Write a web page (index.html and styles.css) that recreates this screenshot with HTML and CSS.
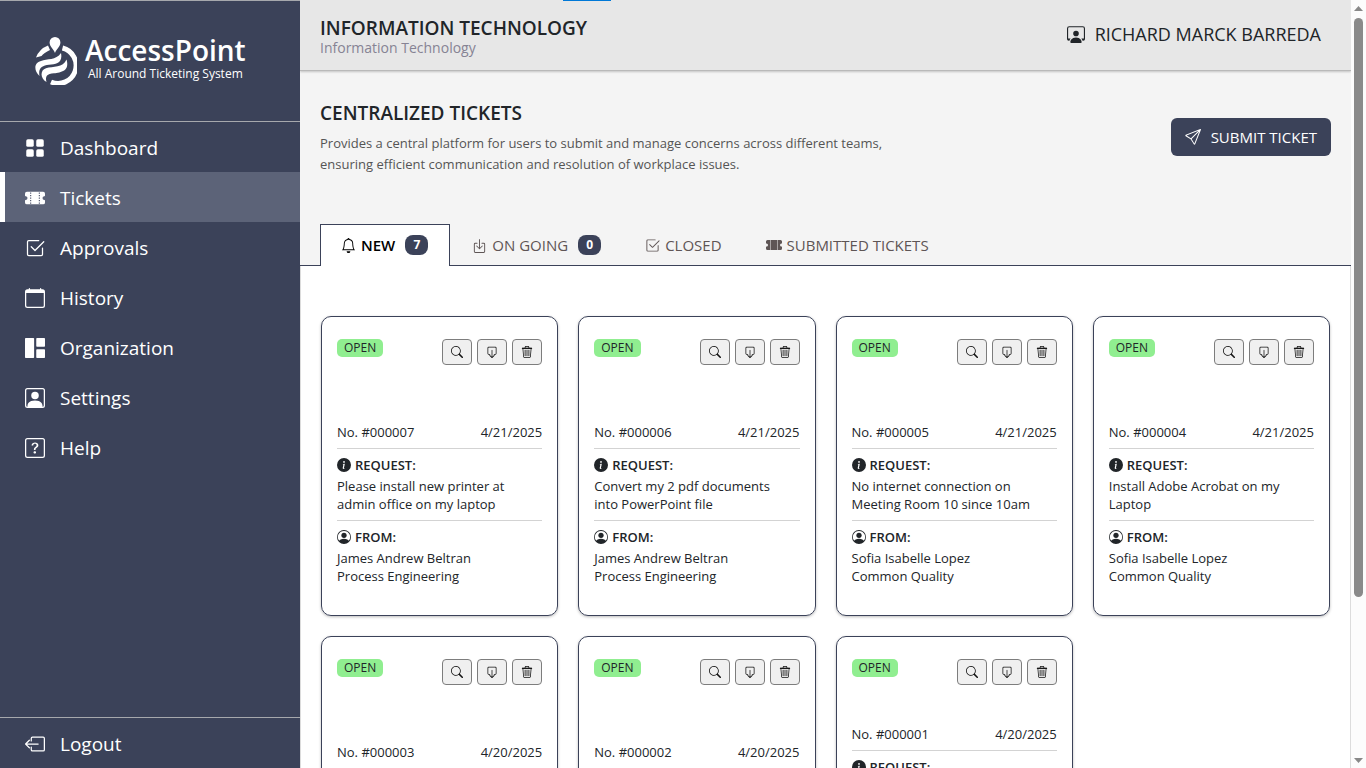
FILE: index.html
```html
<!DOCTYPE html>
<html lang="en">
<head>
<meta charset="utf-8">
<meta name="viewport" content="width=device-width, initial-scale=1">
<title>AccessPoint - Tickets</title>
<link rel="stylesheet" href="styles.css">
</head>
<body>
<svg class="sprite" aria-hidden="true">
  <symbol id="i-grid" viewBox="0 0 16 16"><rect x="1" y="1" width="6" height="6" rx="1.3"/><rect x="9" y="1" width="6" height="6" rx="1.3"/><rect x="1" y="9" width="6" height="6" rx="1.3"/><rect x="9" y="9" width="6" height="6" rx="1.3"/></symbol>
  <symbol id="i-ticket" viewBox="0 0 16 16"><path d="M0 4.5A1.5 1.5 0 0 1 1.5 3h13A1.5 1.5 0 0 1 16 4.500V6a.5.5 0 0 1-.5.5 1.500 1.500 0 0 0 0 3 .5.5 0 0 1 .5.5v1.500a1.500 1.500 0 0 1-1.500 1.500h-13A1.500 1.500 0 0 1 0 11.500V10a.5.5 0 0 1 .5-.5 1.500 1.500 0 1 0 0-3A.5.5 0 0 1 0 6zm4-1v1h1v-1zm1 3v-1H4v1zm7 0v-1h-1v1zm-1-2h1v-1h-1zm-6 3H4v1h1zm7 1v-1h-1v1zm-7 1H4v1h1zm7 1v-1h-1v1zm-8 1v1h1v-1zm7 1h1v-1h-1z"/></symbol>
  <symbol id="i-check" viewBox="0 0 16 16"><path d="M3 14.500A1.500 1.500 0 0 1 1.500 13V3A1.500 1.500 0 0 1 3 1.500h8a.5.5 0 0 1 0 1H3a.5.5 0 0 0-.5.5v10a.5.5 0 0 0 .5.5h10a.5.5 0 0 0 .5-.5V8a.5.5 0 0 1 1 0v5a1.500 1.500 0 0 1-1.500 1.500z"/><path d="m8.354 10.354 7-7a.5.5 0 0 0-.708-.708L8 9.293 5.354 6.646a.5.5 0 1 0-.708.708l3 3a.5.5 0 0 0 .708 0"/></symbol>
  <symbol id="i-calendar" viewBox="0 0 16 16"><path d="M3.500 0a.5.5 0 0 1 .5.5V1h8V.5a.5.5 0 0 1 1 0V1h1a2 2 0 0 1 2 2v11a2 2 0 0 1-2 2H2a2 2 0 0 1-2-2V3a2 2 0 0 1 2-2h1V.5a.5.5 0 0 1 .5-.5M1 4v10a1 1 0 0 0 1 1h12a1 1 0 0 0 1-1V4z"/></symbol>
  <symbol id="i-layout" viewBox="0 0 16 16"><rect x="0" y="0" width="7.300" height="16" rx=".6"/><rect x="9" y="0" width="7" height="7" rx=".6"/><rect x="9" y="9" width="7" height="7" rx=".6"/></symbol>
  <symbol id="i-person-square" viewBox="0 0 16 16"><path d="M11 6a3 3 0 1 1-6 0 3 3 0 0 1 6 0"/><path d="M2 0a2 2 0 0 0-2 2v12a2 2 0 0 0 2 2h12a2 2 0 0 0 2-2V2a2 2 0 0 0-2-2zm12 1a1 1 0 0 1 1 1v12a1 1 0 0 1-1 1v-1c0-1-1-4-6-4s-6 3-6 4v1a1 1 0 0 1-1-1V2a1 1 0 0 1 1-1z"/></symbol>
  <symbol id="i-question" viewBox="0 0 16 16"><path d="M14 1a1 1 0 0 1 1 1v12a1 1 0 0 1-1 1H2a1 1 0 0 1-1-1V2a1 1 0 0 1 1-1zM2 0a2 2 0 0 0-2 2v12a2 2 0 0 0 2 2h12a2 2 0 0 0 2-2V2a2 2 0 0 0-2-2z"/><path d="M5.255 5.786a.237.237 0 0 0 .241.247h.825c.138 0 .248-.113.266-.25.09-.656.54-1.134 1.342-1.134.686 0 1.314.343 1.314 1.168 0 .635-.374.927-.965 1.371-.673.489-1.206 1.060-1.168 1.987l.003.217a.25.25 0 0 0 .25.246h.811a.25.25 0 0 0 .25-.25v-.105c0-.718.273-.927 1.010-1.486.609-.463 1.244-.977 1.244-2.056 0-1.511-1.276-2.241-2.673-2.241-1.267 0-2.655.59-2.750 2.286m1.557 5.763c0 .533.425.927 1.010.927.609 0 1.028-.394 1.028-.927 0-.552-.42-.940-1.029-.940-.584 0-1.009.388-1.009.940"/></symbol>
  <symbol id="i-logout" viewBox="0 0 16 16"><path fill-rule="evenodd" d="M4.500 5.500V3.500a1.500 1.500 0 0 1 1.500-1.500h8.500A1.500 1.500 0 0 1 16 3.500v9a1.500 1.500 0 0 1-1.500 1.500H6a1.500 1.500 0 0 1-1.500-1.500v-2a.5.5 0 0 1 1 0v2a.5.5 0 0 0 .5.5h8.500a.5.5 0 0 0 .5-.5v-9a.5.5 0 0 0-.5-.5H6a.5.5 0 0 0-.5.5v2a.5.5 0 0 1-1 0"/><path fill-rule="evenodd" d="M.146 8.354a.5.5 0 0 1 0-.708l3-3a.5.5 0 1 1 .708.708L1.707 7.500H10.500a.5.5 0 0 1 0 1H1.707l2.147 2.146a.5.5 0 0 1-.708.708z"/></symbol>
  <symbol id="i-workspace" viewBox="0 0 16 16"><path d="M4 16s-1 0-1-1 1-4 5-4 5 3 5 4-1 1-1 1zm4-5.950a2.500 2.500 0 1 0 0-5 2.500 2.500 0 0 0 0 5"/><path d="M2 1a2 2 0 0 0-2 2v9.500A1.500 1.500 0 0 0 1.500 14h.653a5.400 5.400 0 0 1 1.066-2H1V3a1 1 0 0 1 1-1h12a1 1 0 0 1 1 1v9h-2.219c.554.654.89 1.373 1.066 2h.653a1.500 1.500 0 0 0 1.500-1.500V3a2 2 0 0 0-2-2z"/></symbol>
  <symbol id="i-send" viewBox="0 0 16 16"><path d="M15.854.146a.5.5 0 0 1 .11.540l-5.819 14.547a.75.75 0 0 1-1.329.124l-3.178-4.995L.643 7.184a.75.75 0 0 1 .124-1.330L15.314.037a.5.5 0 0 1 .540.110ZM6.636 10.070l2.761 4.338L14.130 2.576zm6.787-8.201L1.591 6.602l4.339 2.760z"/></symbol>
  <symbol id="i-bell" viewBox="0 0 16 16"><path d="M8 16a2 2 0 0 0 2-2H6a2 2 0 0 0 2 2M8 1.918l-.797.161A4 4 0 0 0 4 6c0 .628-.134 2.197-.459 3.742-.16.767-.376 1.566-.663 2.258h10.244c-.287-.692-.502-1.490-.663-2.258C12.134 8.197 12 6.628 12 6a4 4 0 0 0-3.203-3.920zM14.220 12c.223.447.481.801.78 1H1c.299-.199.557-.553.780-1C2.680 10.200 3 6.880 3 6c0-2.420 1.720-4.440 4.005-4.901a1 1 0 1 1 1.990 0A5 5 0 0 1 13 6c0 .88.320 4.200 1.220 6"/></symbol>
  <symbol id="i-box-in" viewBox="0 0 16 16"><path d="M3.500 6a.5.5 0 0 0-.5.5v8a.5.5 0 0 0 .5.5h9a.5.5 0 0 0 .5-.5v-8a.5.5 0 0 0-.5-.5h-2a.5.5 0 0 1 0-1h2A1.500 1.500 0 0 1 14 6.500v8a1.500 1.500 0 0 1-1.500 1.500h-9A1.500 1.500 0 0 1 2 14.500v-8A1.500 1.500 0 0 1 3.500 5h2a.5.5 0 0 1 0 1z"/><path d="M7.646 11.854a.5.5 0 0 0 .708 0l3-3a.5.5 0 0 0-.708-.708L8.500 10.293V1.500a.5.5 0 0 0-1 0v8.793L5.354 8.146a.5.5 0 1 0-.708.708z"/></symbol>
  <symbol id="i-search" viewBox="0 0 16 16"><path d="M11.742 10.344a6.500 6.500 0 1 0-1.397 1.398h-.001q.044.060.098.115l3.850 3.850a1 1 0 0 0 1.415-1.414l-3.850-3.850a1 1 0 0 0-.115-.100zM12 6.500a5.500 5.500 0 1 1-11 0 5.500 5.500 0 0 1 11 0"/></symbol>
  <symbol id="i-box-down" viewBox="0 0 16 16"><path d="M5.500 11.500h-2A1.500 1.500 0 0 1 2 10V2.500A1.500 1.500 0 0 1 3.500 1h9A1.500 1.500 0 0 1 14 2.500V10a1.500 1.500 0 0 1-1.500 1.500h-2v-1h2a.5.5 0 0 0 .5-.5V2.500a.5.5 0 0 0-.5-.5h-9a.5.5 0 0 0-.5.5V10a.5.5 0 0 0 .5.5h2z"/><path d="M7.646 15.854a.5.5 0 0 0 .708 0l3-3a.5.5 0 0 0-.708-.708L8.500 14.293V5.500a.5.5 0 0 0-1 0v8.793l-2.146-2.147a.5.5 0 0 0-.708.708z"/></symbol>
  <symbol id="i-trash" viewBox="0 0 16 16"><path d="M6.500 1h3a.5.5 0 0 1 .5.500v1H6v-1a.5.5 0 0 1 .5-.5M11 2.500v-1A1.500 1.500 0 0 0 9.500 0h-3A1.500 1.500 0 0 0 5 1.500v1H1.500a.5.5 0 0 0 0 1h.538l.853 10.660A2 2 0 0 0 4.885 16h6.230a2 2 0 0 0 1.994-1.840l.853-10.660h.538a.5.5 0 0 0 0-1zm1.958 1-.846 10.580a1 1 0 0 1-.997.920h-6.230a1 1 0 0 1-.997-.920L3.042 3.500z"/><path d="M1.500 3h13" stroke="currentColor" stroke-width="1.600"/><path d="M5.500 5v8.500M8 5v8.500M10.500 5v8.500" stroke="currentColor" stroke-width="1.100"/></symbol>
  <symbol id="i-info" viewBox="0 0 16 16"><path d="M8 16A8 8 0 1 0 8 0a8 8 0 0 0 0 16m.930-9.412-1 4.705c-.070.340.029.533.304.533.194 0 .487-.070.686-.246l-.088.416c-.287.346-.920.598-1.465.598-.703 0-1.002-.422-.808-1.319l.738-3.468c.064-.293.006-.399-.287-.470l-.451-.081.082-.381 2.290-.287zM8 5.500a1 1 0 1 1 0-2 1 1 0 0 1 0 2"/></symbol>
  <symbol id="i-person" viewBox="0 0 16 16"><path d="M11 6a3 3 0 1 1-6 0 3 3 0 0 1 6 0"/><path fill-rule="evenodd" d="M0 8a8 8 0 1 1 16 0A8 8 0 0 1 0 8m8-7a7 7 0 0 0-5.468 11.370C3.242 11.226 4.805 10 8 10s4.757 1.225 5.468 2.370A7 7 0 0 0 8 1"/></symbol>
</svg>

<div class="app">
  <aside class="sidebar">
    <a class="brand" href="#">
      <svg class="brand-logo" viewBox="0 0 42 48" aria-hidden="true">
        <path d="M20 16C19 12.500 14.600 9.500 14.600 5.400a5.400 5.400 0 0 1 10.800 0C25.400 9.500 21 12.500 20 16z"/>
        <path d="M27.500 11A18 18 0 1 1 16 45" fill="none" stroke="currentColor" stroke-width="5"/>
        <path d="M1 20.500A21 21 0 0 1 13 8.500L15 13C11 15 8 17 6.500 19z"/>
        <path d="M26 16C28 26 21 27 14 27.700C7 28.400 3 31 4.500 39C-1 34-1.500 26 6 24C12 21.500 21 23.500 26 16z"/>
        <path d="M31.500 22.500C35 34 26 35.500 19 36.300C12 37 10 39 11.500 45C5 41.500 5 33 11 31.300C18 29 28 31 31.500 22.500z"/>
      </svg>
      <span class="brand-text">
        <span class="brand-name">AccessPoint</span>
        <span class="brand-tag">All Around Ticketing System</span>
      </span>
    </a>
    <nav class="menu">
      <a class="menu-item" href="#"><svg class="icon-lg"><use href="#i-grid"/></svg>Dashboard</a>
      <a class="menu-item active" href="#" aria-current="page"><svg class="icon-lg"><use href="#i-ticket"/></svg>Tickets</a>
      <a class="menu-item" href="#"><svg class="icon-lg"><use href="#i-check"/></svg>Approvals</a>
      <a class="menu-item" href="#"><svg class="icon-lg"><use href="#i-calendar"/></svg>History</a>
      <a class="menu-item" href="#"><svg class="icon-lg"><use href="#i-layout"/></svg>Organization</a>
      <a class="menu-item" href="#"><svg class="icon-lg"><use href="#i-person-square"/></svg>Settings</a>
      <a class="menu-item" href="#"><svg class="icon-lg"><use href="#i-question"/></svg>Help</a>
    </nav>
    <div class="sidebar-foot">
      <a class="menu-item" href="#"><svg class="icon-lg"><use href="#i-logout"/></svg>Logout</a>
    </div>
  </aside>

  <main class="main">
    <div class="load-bar"></div>
    <header class="topbar">
      <div>
        <div class="dept">INFORMATION TECHNOLOGY</div>
        <div class="dept-sub">Information Technology</div>
      </div>
      <div class="user"><svg class="icon-md"><use href="#i-workspace"/></svg>RICHARD MARCK BARREDA</div>
    </header>

    <section class="hero">
      <div class="hero-row">
        <div>
          <h1 class="hero-title">CENTRALIZED TICKETS</h1>
          <p class="hero-desc">Provides a central platform for users to submit and manage concerns across different teams, ensuring efficient communication and resolution of workplace issues.</p>
        </div>
        <button class="submit" type="button"><svg class="icon"><use href="#i-send"/></svg>SUBMIT TICKET</button>
      </div>
      <div class="tabs" role="tablist">
        <button class="tab selected" type="button" role="tab" aria-selected="true"><svg class="icon-tab"><use href="#i-bell"/></svg>NEW<span class="count">7</span></button>
        <button class="tab" type="button" role="tab" aria-selected="false"><svg class="icon-tab"><use href="#i-box-in"/></svg>ON GOING<span class="count">0</span></button>
        <button class="tab" type="button" role="tab" aria-selected="false"><svg class="icon-tab"><use href="#i-check"/></svg>CLOSED</button>
        <button class="tab" type="button" role="tab" aria-selected="false"><svg class="icon"><use href="#i-ticket"/></svg>SUBMITTED TICKETS</button>
      </div>
    </section>

    <section class="cards">
      <article class="card">
        <div class="card-top"><span class="status">OPEN</span><div class="actions"><button type="button" aria-label="View"><svg><use href="#i-search"/></svg></button><button type="button" aria-label="Accept"><svg><use href="#i-box-down"/></svg></button><button type="button" aria-label="Delete"><svg><use href="#i-trash"/></svg></button></div></div>
        <div class="card-meta"><span>No. #000007</span><span>4/21/2025</span></div>
        <div class="field"><h2><svg><use href="#i-info"/></svg>REQUEST:</h2><p>Please install new printer at admin office on my laptop</p></div>
        <div class="field"><h2><svg><use href="#i-person"/></svg>FROM:</h2><p>James Andrew Beltran<br>Process Engineering</p></div>
      </article>
      <article class="card">
        <div class="card-top"><span class="status">OPEN</span><div class="actions"><button type="button" aria-label="View"><svg><use href="#i-search"/></svg></button><button type="button" aria-label="Accept"><svg><use href="#i-box-down"/></svg></button><button type="button" aria-label="Delete"><svg><use href="#i-trash"/></svg></button></div></div>
        <div class="card-meta"><span>No. #000006</span><span>4/21/2025</span></div>
        <div class="field"><h2><svg><use href="#i-info"/></svg>REQUEST:</h2><p>Convert my 2 pdf documents into PowerPoint file</p></div>
        <div class="field"><h2><svg><use href="#i-person"/></svg>FROM:</h2><p>James Andrew Beltran<br>Process Engineering</p></div>
      </article>
      <article class="card">
        <div class="card-top"><span class="status">OPEN</span><div class="actions"><button type="button" aria-label="View"><svg><use href="#i-search"/></svg></button><button type="button" aria-label="Accept"><svg><use href="#i-box-down"/></svg></button><button type="button" aria-label="Delete"><svg><use href="#i-trash"/></svg></button></div></div>
        <div class="card-meta"><span>No. #000005</span><span>4/21/2025</span></div>
        <div class="field"><h2><svg><use href="#i-info"/></svg>REQUEST:</h2><p>No internet connection on Meeting Room 10 since 10am</p></div>
        <div class="field"><h2><svg><use href="#i-person"/></svg>FROM:</h2><p>Sofia Isabelle Lopez<br>Common Quality</p></div>
      </article>
      <article class="card">
        <div class="card-top"><span class="status">OPEN</span><div class="actions"><button type="button" aria-label="View"><svg><use href="#i-search"/></svg></button><button type="button" aria-label="Accept"><svg><use href="#i-box-down"/></svg></button><button type="button" aria-label="Delete"><svg><use href="#i-trash"/></svg></button></div></div>
        <div class="card-meta"><span>No. #000004</span><span>4/21/2025</span></div>
        <div class="field"><h2><svg><use href="#i-info"/></svg>REQUEST:</h2><p>Install Adobe Acrobat on my Laptop</p></div>
        <div class="field"><h2><svg><use href="#i-person"/></svg>FROM:</h2><p>Sofia Isabelle Lopez<br>Common Quality</p></div>
      </article>
      <article class="card">
        <div class="card-top"><span class="status">OPEN</span><div class="actions"><button type="button" aria-label="View"><svg><use href="#i-search"/></svg></button><button type="button" aria-label="Accept"><svg><use href="#i-box-down"/></svg></button><button type="button" aria-label="Delete"><svg><use href="#i-trash"/></svg></button></div></div>
        <div class="card-meta"><span>No. #000003</span><span>4/20/2025</span></div>
        <div class="field"><h2><svg><use href="#i-info"/></svg>REQUEST:</h2><p>Replace the keyboard of my office desktop</p></div>
        <div class="field"><h2><svg><use href="#i-person"/></svg>FROM:</h2><p>Sofia Isabelle Lopez<br>Common Quality</p></div>
      </article>
      <article class="card">
        <div class="card-top"><span class="status">OPEN</span><div class="actions"><button type="button" aria-label="View"><svg><use href="#i-search"/></svg></button><button type="button" aria-label="Accept"><svg><use href="#i-box-down"/></svg></button><button type="button" aria-label="Delete"><svg><use href="#i-trash"/></svg></button></div></div>
        <div class="card-meta"><span>No. #000002</span><span>4/20/2025</span></div>
        <div class="field"><h2><svg><use href="#i-info"/></svg>REQUEST:</h2><p>Reset the password of my company email</p></div>
        <div class="field"><h2><svg><use href="#i-person"/></svg>FROM:</h2><p>James Andrew Beltran<br>Process Engineering</p></div>
      </article>
      <article class="card">
        <div class="card-top"><span class="status">OPEN</span><div class="actions"><button type="button" aria-label="View"><svg><use href="#i-search"/></svg></button><button type="button" aria-label="Accept"><svg><use href="#i-box-down"/></svg></button><button type="button" aria-label="Delete"><svg><use href="#i-trash"/></svg></button></div></div>
        <div class="card-meta"><span>No. #000001</span><span>4/20/2025</span></div>
        <div class="field"><h2><svg><use href="#i-info"/></svg>REQUEST:</h2><p>Set up the projector and the sound system in the meeting room for the monthly review</p></div>
        <div class="field"><h2><svg><use href="#i-person"/></svg>FROM:</h2><p>James Andrew Beltran<br>Process Engineering</p></div>
      </article>
    </section>
  </main>

  <div class="scrollbar" aria-hidden="true">
    <svg class="arrow" viewBox="0 0 9 5"><path d="M0 5 4.500 0 9 5z"/></svg>
    <div class="track"><div class="thumb"></div></div>
    <svg class="arrow" viewBox="0 0 9 5"><path d="M0 0h9L4.500 5z"/></svg>
  </div>
</div>
</body>
</html>
```

FILE: styles.css
```css
* { box-sizing: border-box; }

body {
  margin: 0;
  font-family: "Segoe UI", "Open Sans", "Noto Sans", sans-serif;
  font-size: 13px;
  color: #212529;
  background: #fff;
}

h1, h2, p { margin: 0; }
a { color: inherit; text-decoration: none; }
button { font-family: inherit; cursor: pointer; }
svg { fill: currentColor; flex: none; }
.sprite { position: absolute; width: 0; height: 0; }
.icon { width: 16px; height: 16px; }
.icon-tab { width: 15px; height: 15px; }
.icon-md { width: 18px; height: 18px; }
.icon-lg { width: 20px; height: 20px; }

.app { display: flex; height: 100vh; overflow: hidden; }

/* Sidebar */
.sidebar {
  display: flex;
  flex-direction: column;
  flex: 0 0 300px;
  color: #fff;
  background: #3b4259;
  border-top: 1px solid #a6a8ad;
}
.brand {
  display: flex;
  align-items: center;
  gap: 8px;
  height: 121px;
  padding-left: 35px;
  border-bottom: 1px solid #a6a8ad;
}
.brand-logo { width: 42px; height: 48px; }
.brand-text { display: flex; flex-direction: column; align-items: center; padding-bottom: 4px; }
.brand-name { font-size: 28px; line-height: 30px; font-weight: 600; }
.brand-tag { font-size: 12px; line-height: 18px; font-weight: 500; }
.menu { flex: 1; }
.menu-item {
  display: flex;
  align-items: center;
  gap: 15px;
  height: 50px;
  padding: 2px 0 0 20px;
  border-left: 5px solid transparent;
  font-size: 19px;
}
.menu-item.active { background: #5c6378; border-left-color: #fff; }
.sidebar-foot { border-top: 1px solid #a6a8ad; }

/* Main pane */
.main {
  position: relative;
  flex: 1;
  min-width: 0;
  overflow-y: scroll;
  scrollbar-width: none;
}
.load-bar { position: absolute; top: 0; left: 25%; width: 48px; height: 1px; background: #0078d7; z-index: 1; }
.topbar {
  display: flex;
  align-items: center;
  justify-content: space-between;
  height: 71px;
  padding: 0 30px 0 20px;
  background: #e7e7e7;
  border-bottom: 1px solid #b9b9b9;
  box-shadow: 0 1px 2px #0003;
  position: relative;
}
.dept { font-size: 19px; line-height: 22px; font-weight: 600; padding-top: 3px; }
.dept-sub { font-size: 14px; line-height: 18px; color: #868394; }
.user { display: flex; align-items: center; gap: 10px; padding-bottom: 2px; font-size: 18px; font-weight: 500; }

.hero { background: #f4f4f4; }
.hero-row {
  display: flex;
  align-items: flex-start;
  justify-content: space-between;
  padding: 30px 20px 0;
}
.hero-title { font-size: 19px; line-height: 24px; font-weight: 600; }
.hero-desc { max-width: 600px; margin-top: 8px; line-height: 21px; color: #555; }
.submit {
  display: flex;
  align-items: center;
  gap: 10px;
  height: 38px;
  margin-top: 17px;
  padding: 0 14px;
  border: 0;
  border-radius: 6px;
  font-size: 15px;
  color: #fff;
  background: #3b4259;
}

.tabs { display: flex; margin-top: 49px; padding: 0 20px; height: 42px; box-shadow: inset 0 -1px #3b4259; }
.tab {
  display: flex;
  align-items: center;
  gap: 5px;
  height: 42px;
  padding: 0 21px 1px;
  border: 1px solid transparent;
  border-bottom: 0;
  font-size: 15px;
  color: #5e5555;
  background: none;
}
.tab.selected { padding: 0 21px 1px 20px; font-weight: 600; color: #000; background: #fff; border-color: #3b4259; }
.count {
  min-width: 23px;
  margin-left: 5px;
  border-radius: 8px;
  font-size: 12px;
  line-height: 20px;
  font-weight: 700;
  text-align: center;
  color: #fff;
  background: #3b4259;
}

/* Ticket cards */
.cards {
  display: grid;
  grid-template-columns: repeat(4, 1fr);
  gap: 20px;
  padding: 50px 20px 20px;
  border: solid #dcdcdc;
  border-width: 0 1px;
}
.card {
  display: flex;
  flex-direction: column;
  min-height: 300px;
  padding: 22px 15px 30px;
  border: 1px solid #3b4259;
  border-radius: 10px;
  box-shadow: 0 1px 3px #0004;
  line-height: 18px;
}
.card-top { display: flex; justify-content: space-between; align-items: flex-start; margin-bottom: auto; }
.status { padding: 0 7px; border-radius: 5px; font-size: 12px; background: #90ee90; }
.actions { display: flex; gap: 5px; }
.actions button {
  display: flex;
  align-items: center;
  justify-content: center;
  width: 30px;
  height: 26px;
  padding: 0;
  border: 1px solid #7d7d7d;
  border-radius: 4px;
  color: #111;
  background: #f0f0f0;
}
.actions svg { width: 12px; height: 12px; }
.card-meta { display: flex; justify-content: space-between; padding-bottom: 7px; }
.field { padding: 7px 0; border-top: 1px solid #d3d3d3; }
.field:last-child { padding-bottom: 0; }
.field h2 { display: flex; align-items: center; gap: 4px; margin-bottom: 3px; font-size: 13px; font-weight: 600; }
.field p { padding-right: 6px; }
.field svg { width: 14px; height: 14px; }

/* Scroll track */
.scrollbar {
  display: flex;
  flex-direction: column;
  align-items: center;
  flex: 0 0 15px;
  padding: 6px 0 5px;
  color: #888;
  background: #fcfcfc;
}
.arrow { width: 9px; height: 5px; }
.track { flex: 1; width: 9px; padding: 7px 0; }
.thumb { height: 79%; border-radius: 5px; background: #8a8a8a; }
```
